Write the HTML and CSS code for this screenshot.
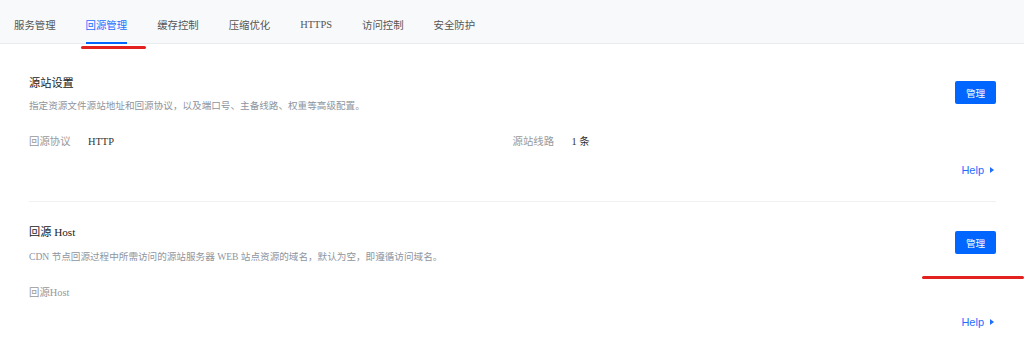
FILE: index.html
```html
<!DOCTYPE html>
<html lang="zh-CN">
<head>
<meta charset="utf-8">
<title>回源管理</title>
<link rel="stylesheet" href="styles.css">
</head>
<body>
<div class="page">
  <nav class="tabs">
    <div class="tab">服务管理</div>
    <div class="tab active">回源管理</div>
    <div class="tab">缓存控制</div>
    <div class="tab">压缩优化</div>
    <div class="tab">HTTPS</div>
    <div class="tab">访问控制</div>
    <div class="tab">安全防护</div>
  </nav>
  <main class="content">
    <section class="section">
      <div class="head">
        <div class="head-text">
          <h2 class="title">源站设置</h2>
          <p class="desc">指定资源文件源站地址和回源协议，以及端口号、主备线路、权重等高级配置。</p>
        </div>
        <button class="btn">管理</button>
      </div>
      <div class="rows">
        <div class="row"><span class="label">回源协议</span><span class="value">HTTP</span></div>
        <div class="row"><span class="label">源站线路</span><span class="value">1 条</span></div>
      </div>
      <div class="help"><a class="help-link">Help<span class="tri"></span></a></div>
    </section>
    <section class="section second">
      <div class="head">
        <div class="head-text">
          <h2 class="title">回源 Host</h2>
          <p class="desc">CDN 节点回源过程中所需访问的源站服务器 WEB 站点资源的域名，默认为空，即遵循访问域名。</p>
        </div>
        <button class="btn">管理</button>
      </div>
      <div class="rows">
        <div class="row"><span class="label">回源Host</span></div>
      </div>
      <div class="help"><a class="help-link">Help<span class="tri"></span></a></div>
    </section>
  </main>
  <div class="mark mark-tab"></div>
  <div class="mark mark-btn"></div>
</div>
</body>
</html>
```

FILE: styles.css
```css
* { box-sizing: border-box; }
html, body { margin: 0; padding: 0; }
body {
  background: #fff;
  font-family: "Liberation Serif", "Noto Sans CJK SC", serif;
  color: #333;
  width: 1024px;
  height: 352px;
  overflow: hidden;
}
.page { position: relative; width: 1024px; height: 352px; }

.tabs {
  display: flex;
  gap: 30px;
  height: 44px;
  padding-left: 14px;
  background: #f8f9fb;
  border-bottom: 1px solid #e9ecef;
}
.tab {
  position: relative;
  height: 43px;
  padding-top: 6px;
  display: flex;
  align-items: center;
  font-size: 10.4px;
  color: #555;
  white-space: nowrap;
}
.tab.active { color: #1f6dff; }
.tab.active::after {
  content: "";
  position: absolute;
  left: 0; right: 0; bottom: -1px;
  height: 2px;
  background: #0066ff;
}

.content { padding: 9px 28px 0 29px; }
.section {
  padding: 22px 0 23px;
  border-bottom: 1px solid #eef0f2;
}
.section.second { border-bottom: none; padding-top: 22px; }
.head { display: flex; justify-content: space-between; align-items: flex-start; }
.title {
  margin: 0;
  font-size: 11.2px;
  line-height: 16px;
  font-weight: normal;
  color: #222;
}
.desc {
  margin: 8px 0 0;
  font-size: 9.6px;
  line-height: 14px;
  color: #8e95a0;
}
.second .desc { margin-top: 10px; }
.btn {
  margin-top: 6px;
  width: 41px;
  height: 23px;
  border: none;
  border-radius: 2px;
  background: #0066ff;
  color: #fff;
  font-family: "Noto Sans CJK SC", sans-serif;
  font-size: 9.6px;
  padding: 0;
}
.second .btn { margin-top: 7px; }
.rows {
  display: grid;
  grid-template-columns: 1fr 1fr;
  margin-top: 21px;
}
.row { display: flex; font-size: 10.4px; line-height: 16px; }
.label { width: 59px; color: #999; }
.value { color: #333; }
.help {
  display: flex;
  justify-content: flex-end;
  margin-top: 12px;
  padding-right: 2px;
}
.second .help { margin-top: 13px; }
.help-link {
  display: flex;
  align-items: center;
  font-family: "Liberation Sans", Arial, sans-serif;
  font-size: 11px;
  line-height: 16px;
  color: #1f6dff;
}
.tri {
  margin-left: 6px;
  width: 0; height: 0;
  border-top: 3.5px solid transparent;
  border-bottom: 3.5px solid transparent;
  border-left: 4px solid #1f6dff;
}

.mark {
  position: absolute;
  height: 3px;
  border-radius: 2px;
  background: #e3211f;
}
.mark-tab { left: 81px; top: 46px; width: 65px; }
.mark-btn { left: 922px; top: 276px; width: 102px; }
```
